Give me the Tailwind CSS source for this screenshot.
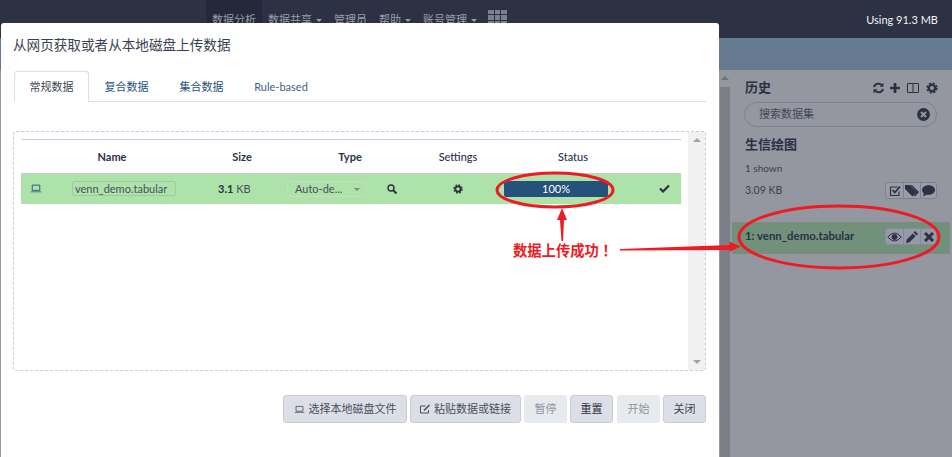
<!DOCTYPE html>
<html lang="en">
<head>
  <meta charset="UTF-8">
  <title>从网页获取或者从本地磁盘上传数据</title>
  <script src="https://cdn.jsdelivr.net/npm/@tailwindcss/browser@4"></script>
</head>
<body class="relative w-[952px] h-[457px] overflow-hidden bg-[#94979f] text-[12px] text-[#2c3143] font-['Lato','Noto_Sans_CJK_SC',sans-serif]">
  <svg width="0" height="0" class="absolute">
    <symbol id="gear" viewBox="0 0 16 16">
      <circle cx="8" cy="8" r="4.2" fill="none" stroke="currentColor" stroke-width="3"/>
      <circle cx="8" cy="8" r="6.3" fill="none" stroke="currentColor" stroke-width="2.4" stroke-dasharray="2.9 2.05"/>
    </symbol>
    <symbol id="laptop" viewBox="0 0 16 12">
      <path d="M3 1.5h10v7H3z" fill="none" stroke="currentColor" stroke-width="1.2"/>
      <path d="M1 10h14v1H1z" fill="currentColor"/>
    </symbol>
    <symbol id="caret" viewBox="0 0 6 3"><path d="M0 0h6L3 3z" fill="currentColor"/></symbol>
  </svg>

  <!-- Navbar (dimmed behind the modal) -->
  <header class="flex h-[38px] bg-[#2c3143] text-[#9a9eaa] text-[11px]">
    <nav class="flex items-start ml-[206px] h-full">
      <span class="px-[6px] h-full pt-[12px] bg-[#24283a]">数据分析</span>
      <span class="flex items-start gap-[4px] pl-[6px] pr-[6px] pt-[12px]">数据共享<svg class="w-[6px] h-[3px] mt-[7px]"><use href="#caret"/></svg></span>
      <span class="px-[6px] pt-[12px]">管理员</span>
      <span class="flex items-start gap-[4px] px-[6px] pt-[12px]">帮助<svg class="w-[6px] h-[3px] mt-[7px]"><use href="#caret"/></svg></span>
      <span class="flex items-start gap-[4px] px-[6px] pt-[12px]">账号管理<svg class="w-[6px] h-[3px] mt-[7px]"><use href="#caret"/></svg></span>
      <span class="grid grid-cols-3 gap-px w-[19px] h-[15px] ml-[5px] mt-[10px]">
        <i class="bg-[#7c7f8c]"></i><i class="bg-[#7c7f8c]"></i><i class="bg-[#7c7f8c]"></i>
        <i class="bg-[#7c7f8c]"></i><i class="bg-[#7c7f8c]"></i><i class="bg-[#7c7f8c]"></i>
        <i class="bg-[#7c7f8c]"></i><i class="bg-[#7c7f8c]"></i><i class="bg-[#7c7f8c]"></i>
      </span>
    </nav>
    <span class="ml-auto mr-[14px] mt-[12px] text-[#f2f3f5]">Using 91.3 MB</span>
  </header>
  <div class="h-[32px] bg-[#667b90]"></div>

  <!-- Page behind: scrollbar and history panel -->
  <div class="flex h-[387px]">
    <div class="w-[720px]"></div>
    <div class="w-[10px] bg-[#7b7e88]">
      <div class="flex justify-center h-[17px] pt-[6px] bg-[#94979f] text-[#6f727c]"><svg class="w-[8px] h-[4px] rotate-180"><use href="#caret"/></svg></div>
    </div>
    <aside class="flex-1 min-w-0">
      <div class="flex items-center justify-between pl-[15px] pr-[14px] pt-[8px] h-[27px]">
        <h2 class="text-[13px] font-bold text-[#2c3143]">历史</h2>
        <div class="flex items-center gap-[5px] text-[#2c3143]">
          <svg class="w-[13px] h-[12px]" viewBox="0 0 12 12" fill="none" stroke="currentColor" stroke-width="2">
            <path d="M1.5 5a4.6 4.6 0 0 1 8-1.6M10.5 7a4.6 4.6 0 0 1-8 1.6"/>
            <path d="M11 .8v4H7zM1 11.2v-4h4z" fill="currentColor" stroke="none"/>
          </svg>
          <svg class="w-[10px] h-[10px]" viewBox="0 0 11 11"><path d="M4 0h3v4h4v3H7v4H4V7H0V4h4z" fill="currentColor"/></svg>
          <svg class="w-[12px] h-[12px] ml-[2px]" viewBox="0 0 12 12" fill="none" stroke="currentColor"><path d="M.5 1.5h11v9H.5zM6 1.5v9"/></svg>
          <svg class="w-[12px] h-[12px] ml-[2px]"><use href="#gear"/></svg>
        </div>
      </div>
      <div class="flex items-center justify-between h-[25px] mt-[5px] ml-[14px] mr-[15px] pl-[14px] pr-[6px] rounded-full border border-[#7d8192] text-[11px] text-[#42465a]">
        <span>搜索数据集</span>
        <svg class="w-[13px] h-[13px]" viewBox="0 0 13 13"><circle cx="6.500" cy="6.500" r="6.500" fill="#2c3143"/><path d="M4 4l5 5M9 4l-5 5" stroke="#94979f" stroke-width="2"/></svg>
      </div>
      <h3 class="mt-[7px] ml-[15px] text-[13px] leading-[20px] font-bold text-[#2c3143]">生信绘图</h3>
      <p class="mt-[7px] ml-[15px] text-[10px] leading-[14px] text-[#3c4050]">1 shown</p>
      <div class="flex items-center justify-between h-[17px] mt-[7px] ml-[15px] mr-[15px] text-[#3c4050]">
        <span class="text-[10.500px] mt-[1px]">3.09 KB</span>
        <span class="flex h-[17px] border border-[#7d8192] rounded-[3px] bg-[#9a9da6]">
          <span class="w-[18px] flex items-center justify-center border-r border-[#7d8192]">
            <svg class="w-[12px] h-[12px]" viewBox="0 0 12 12" fill="none" stroke="#2c3143" stroke-width="1.2"><path d="M10 6.500V10.500H1.500V2h7"/><path d="M3.500 5l2.300 2.500L11 1.500" stroke-width="1.800"/></svg>
          </span>
          <span class="w-[17px] flex items-center justify-center border-r border-[#7d8192]">
            <svg class="w-[14px] h-[12px]" viewBox="0 0 14 12" fill="#2c3143"><path d="M0 0h5l7 7-4.500 4.500L0 4zM7 0l7 7-4 4.500-1-1 3-3.500L5.500 0z"/></svg>
          </span>
          <span class="w-[15px] flex items-center justify-center">
            <svg class="w-[13px] h-[12px]" viewBox="0 0 13 12" fill="#2c3143"><ellipse cx="6.500" cy="5" rx="6.500" ry="4.800"/><path d="M2 8l-1 3.500L6 9z"/></svg>
          </span>
        </span>
      </div>
      <!-- History dataset row -->
      <div class="flex items-center justify-between h-[32px] mt-[23px] ml-[2px] mr-[2px] pl-[13px] pr-[13px] bg-[#72917a] border-y border-[#7d8a85]">
        <span class="text-[11.400px] font-bold text-[#2c3143] -mt-[4px]">1: venn_demo.tabular</span>
        <span class="flex h-[17px] -mt-[3px] rounded-[3px] bg-[#959aa6] border border-[#848a96]">
          <span class="w-[18px] flex items-center justify-center border-r border-[#848a96]">
            <svg class="w-[15px] h-[10px]" viewBox="0 0 15 10" fill="none" stroke="#2c3143"><path d="M.8 5Q7.500-3 14.200 5 7.500 13 .8 5z"/><circle cx="7.500" cy="5" r="2.500" fill="#2c3143"/></svg>
          </span>
          <span class="w-[17px] flex items-center justify-center border-r border-[#848a96]">
            <svg class="w-[12px] h-[12px]" viewBox="0 0 12 12" fill="#2c3143"><path d="M0 12l.8-3.500 6-6 2.700 2.700-6 6zM7.500 1.500L9 0l3 3-1.500 1.500z"/></svg>
          </span>
          <span class="w-[15px] flex items-center justify-center">
            <svg class="w-[10px] h-[10px]" viewBox="0 0 10 10" stroke="#2c3143" stroke-width="3"><path d="M1 1l8 8M9 1l-8 8"/></svg>
          </span>
        </span>
      </div>
    </aside>
  </div>

  <!-- Upload modal -->
  <section class="absolute left-[1px] top-[23px] w-[718px] h-[440px] bg-white rounded-t-[3px] text-[#2c3143]">
    <h1 class="pl-[12px] pt-[13px] text-[13.600px] leading-[18px] text-[#3a3f50]">从网页获取或者从本地磁盘上传数据</h1>

    <div class="flex h-[31px] mt-[17px] mx-[13px] w-[692px] border-b border-[#dcdfe6] text-[11px] text-[#25527b]">
      <span class="flex items-center justify-center w-[75px] h-[31px] pt-[2px] border border-b-white border-[#dcdfe6] rounded-t-[3px] text-[#3f4454]">常规数据</span>
      <span class="flex items-center justify-center w-[75px] pt-[2px]">复合数据</span>
      <span class="flex items-center justify-center w-[75px] pt-[2px]">集合数据</span>
      <span class="flex items-center justify-center w-[84px] pt-[2px] text-[#3f6186]">Rule-based</span>
    </div>

    <!-- Drop zone -->
    <div class="flex mt-[29px] ml-[12px] w-[693px] h-[240px] border border-dashed border-[#c9ccd9] rounded-[3px]">
      <div class="w-[667px] pl-[7px]">
        <div class="grid grid-cols-[182px_78px_138px_78px_152px_32px] items-center h-[35px] mt-[7px] pt-[1px] border-y border-[#c6cbdc] text-[11px] font-bold text-center text-[#2c3143]">
          <span>Name</span>
          <span>Size</span>
          <span>Type</span>
          <span class="font-medium">Settings</span>
          <span class="font-medium">Status</span>
        </div>
        <div class="flex items-center h-[30px] bg-[#ade3a9] text-[11px]">
          <svg class="w-[12px] h-[9px] ml-[9px] text-[#25527b] -mt-[2px]"><use href="#laptop"/></svg>
          <span class="w-[104px] h-[15px] ml-[30px] -mt-[1px] px-[2px] leading-[13px] border border-[#a3c8a6] rounded-[2px] whitespace-nowrap text-[#4a4f5e]">venn_demo.tabular</span>
          <span class="w-[46px] ml-[42px] whitespace-nowrap text-[#4a4f5e]"><b class="text-[#2c3143]">3.1</b> KB</span>
          <span class="flex items-center justify-between w-[80px] h-[16px] ml-[23px] pl-[7px] pr-[6px] border border-[#c6dcc4] rounded-[3px] text-[#4a4f5e]">Auto-de...<svg class="w-[6px] h-[3px] text-[#7f8a8a] mt-[1px]"><use href="#caret"/></svg></span>
          <svg class="w-[10px] h-[10px] ml-[20px] -mt-[1px]" viewBox="0 0 10 10" fill="none" stroke="#2c3143" stroke-width="1.400"><circle cx="4" cy="4" r="3"/><path d="M6.200 6.200L9.500 9.500" stroke-width="2"/></svg>
          <svg class="w-[10px] h-[10px] ml-[56px] -mt-[1px] text-[#2c3143]"><use href="#gear"/></svg>
          <span class="flex items-center justify-center w-[104px] h-[16px] ml-[41px] bg-[#25527b] rounded-[2px] text-white">100%</span>
          <svg class="w-[11px] h-[9px] ml-[51px] -mt-[1px]" viewBox="0 0 11 9" fill="none" stroke="#2c3143" stroke-width="2.200"><path d="M1 4.500l3 3L10 1.500"/></svg>
        </div>
      </div>
      <div class="flex flex-col justify-between items-center w-[17px] h-[238px] ml-[7px] py-[6px] bg-[#f1f1f1] text-[#a3a3a3]">
        <svg class="w-[8px] h-[4px] rotate-180"><use href="#caret"/></svg>
        <svg class="w-[8px] h-[4px]"><use href="#caret"/></svg>
      </div>
    </div>

    <!-- Buttons -->
    <div class="flex justify-end gap-[3px] mt-[24px] mr-[13px] text-[11px]">
      <button class="flex items-center justify-center gap-[4px] h-[28px] w-[124px] rounded-[3px] bg-[#dcdfe5] border border-[#c8cdd9] text-[#4a4f5e]">
        <svg class="w-[11px] h-[9px]"><use href="#laptop"/></svg>选择本地磁盘文件
      </button>
      <button class="flex items-center justify-center gap-[3px] h-[28px] w-[111px] rounded-[3px] bg-[#dcdfe5] border border-[#c8cdd9] text-[#4a4f5e]">
        <svg class="w-[11px] h-[10px]" viewBox="0 0 11 10" fill="none" stroke="currentColor"><path d="M8.500 6v3h-8V2h5"/><path d="M4 6.500L9.500 1" stroke-width="1.600"/></svg>粘贴数据或链接
      </button>
      <button class="h-[28px] w-[43px] rounded-[3px] bg-[#e8ebee] text-[#8f94a0]">暂停</button>
      <button class="h-[28px] w-[43px] rounded-[3px] bg-[#dcdfe5] border border-[#c8cdd9] text-[#2c3143]">重置</button>
      <button class="h-[28px] w-[43px] ml-[1px] rounded-[3px] bg-[#e8ebee] text-[#8f94a0]">开始</button>
      <button class="h-[28px] w-[43px] rounded-[3px] bg-[#dcdfe5] border border-[#c8cdd9] text-[#3f4454]">关闭</button>
    </div>
  </section>

  <!-- Red annotations -->
  <svg class="absolute inset-0 pointer-events-none" width="952" height="457" fill="none" stroke="#ed1c24">
    <ellipse cx="555" cy="190" rx="58" ry="17" stroke-width="3"/>
    <ellipse cx="839" cy="237" rx="100" ry="31" stroke-width="3"/>
    <path d="M562 208l-5 12h3L561.500 241h1.500L564 220h3z" fill="#ed1c24" stroke="none"/>
    <path d="M620 249L620 250.500 730 250 729 252 741 246.500 729 241.500 730 245z" fill="#ed1c24" stroke="none"/>
  </svg>
  <span class="absolute left-[513px] top-[240px] text-[14.300px] leading-[20px] font-bold text-[#ed1c24] [text-shadow:0_0_2px_#fff,0_0_2px_#fff]">数据上传成功<span class="font-['Noto_Sans_CJK_TC']">！</span></span>
</body>
</html>
